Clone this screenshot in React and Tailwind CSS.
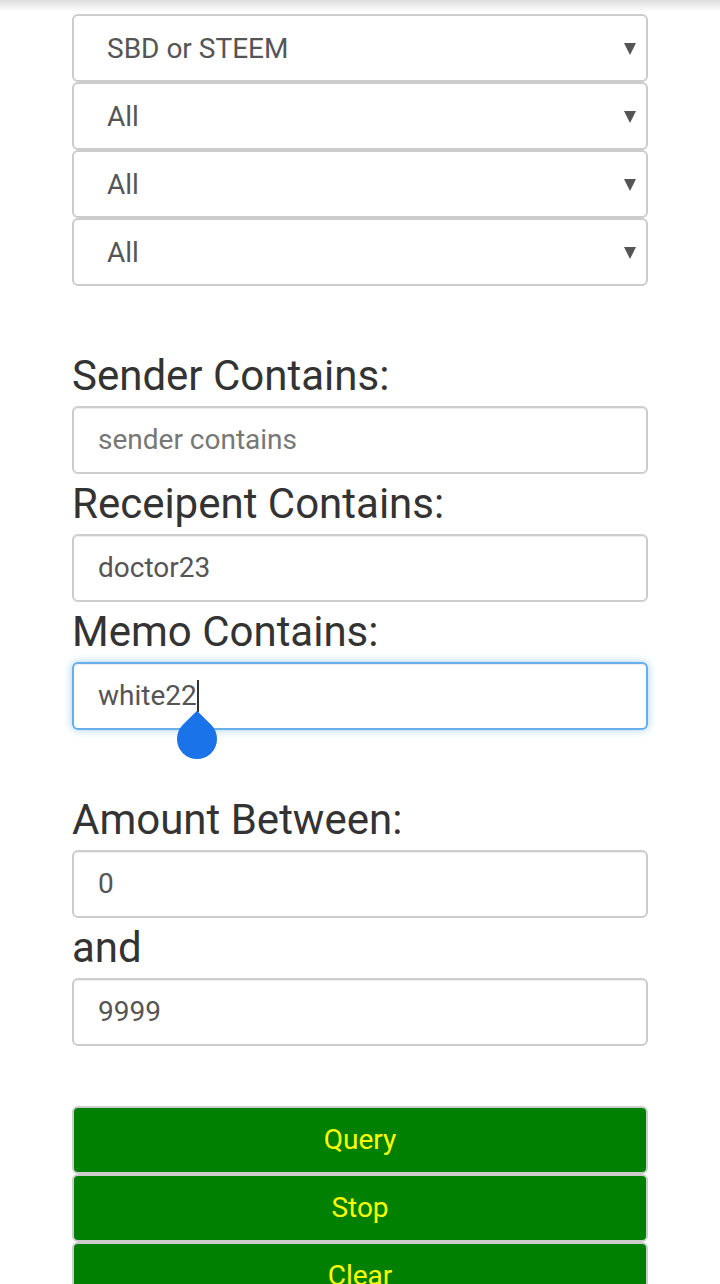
import React from 'react';

const font = { fontFamily: 'Roboto, "Liberation Sans", sans-serif' };

const SelectBox = ({ label }) => (
  <div className="relative flex h-[68px] items-center rounded-[6px] border-2 border-[#cccccc] bg-white pl-[33px] pt-[2px] text-[28px] text-[#555555]">
    <span>{label}</span>
    <svg className="absolute right-[10px] top-[27px]" width="12" height="12" viewBox="0 0 12 12">
      <path d="M0 0 L12 0 L6 12 Z" fill="#555555" />
    </svg>
  </div>
);

const Label = ({ children }) => (
  <div className="h-[60px] text-[42px] leading-[60px] text-[#333333]">{children}</div>
);

const TextBox = ({ value, placeholder, focused, caret }) => (
  <div
    className={`flex h-[68px] items-center rounded-[6px] border-2 bg-white pl-[24px] text-[28px] ${
      focused
        ? 'border-[#66afe9] shadow-[0_0_8px_rgba(102,175,233,0.6),inset_0_1px_1px_rgba(0,0,0,0.075)]'
        : 'border-[#cccccc] shadow-[inset_0_1px_1px_rgba(0,0,0,0.075)]'
    }`}
  >
    {value ? (
      <span className="text-[#555555]">{value}</span>
    ) : (
      <span className="text-[#777777]">{placeholder}</span>
    )}
    {caret && (
      <span className="relative inline-block h-[32px] w-[2px] bg-[#333333]">
        {/* text selection handle */}
        <span className="absolute left-[-20px] top-[39px] block h-[40px] w-[40px] rotate-45 rounded-full rounded-tl-none bg-[#1a73e8]" />
      </span>
    )}
  </div>
);

const Btn = ({ children }) => (
  <div className="flex h-[68px] items-center justify-center rounded-[6px] border-2 border-[#cccccc] bg-[#008000] text-[28px] text-[#ffff00]">
    {children}
  </div>
);

export default function App() {
  return (
    <div className="relative min-h-[1284px] overflow-hidden bg-white" style={font}>
      <div className="pointer-events-none absolute left-0 right-0 top-0 z-10 h-[12px] bg-linear-to-b from-[rgba(0,0,0,0.13)] to-transparent" />
      <div className="ml-[72px] flex w-[576px] flex-col pt-[14px]">
        <SelectBox label="SBD or STEEM" />
        <SelectBox label="All" />
        <SelectBox label="All" />
        <SelectBox label="All" />

        <div className="h-[60px]" />
        <Label>Sender Contains:</Label>
        <TextBox placeholder="sender contains" />
        <Label>Receipent Contains:</Label>
        <TextBox value="doctor23" />
        <Label>Memo Contains:</Label>
        <TextBox value="white22" focused caret />

        <div className="h-[60px]" />
        <Label>Amount Between:</Label>
        <TextBox value="0" />
        <Label>and</Label>
        <TextBox value="9999" />

        <div className="h-[60px]" />
        <Btn>Query</Btn>
        <Btn>Stop</Btn>
        <Btn>Clear</Btn>
      </div>
    </div>
  );
}
